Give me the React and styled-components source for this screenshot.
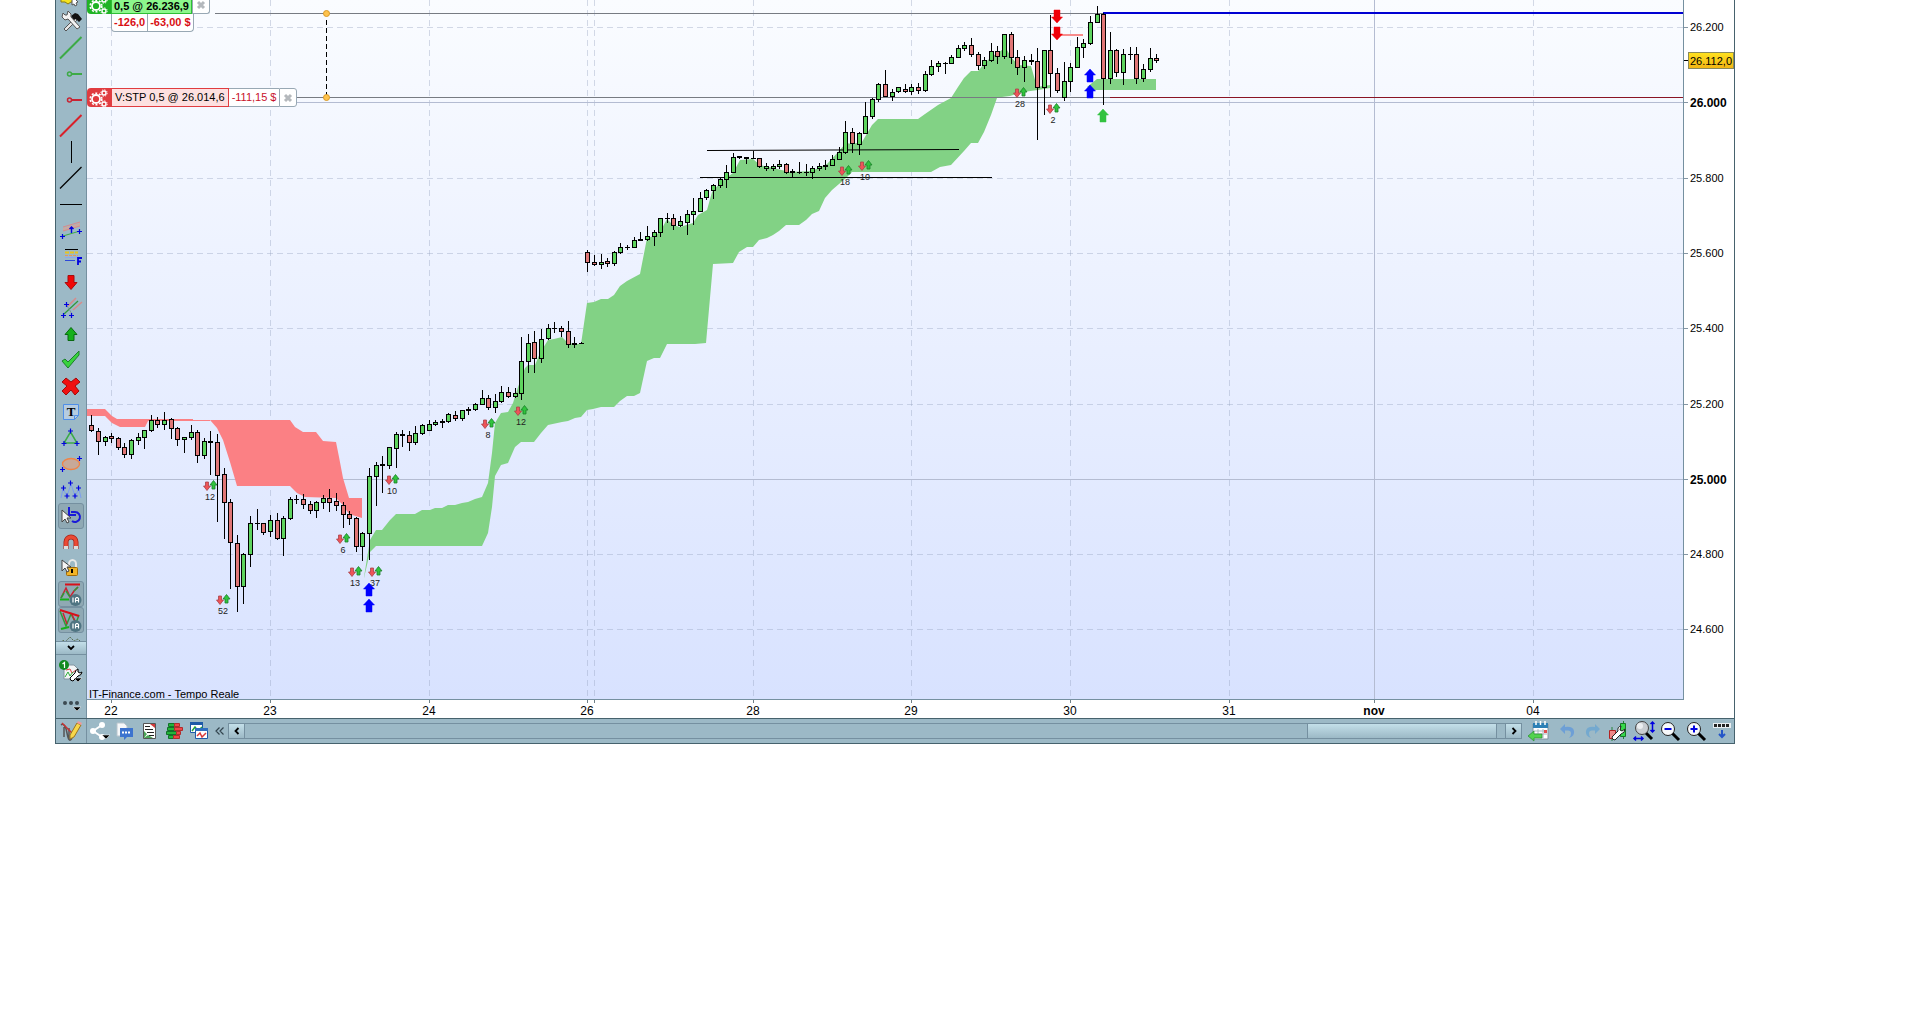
import React from "react";
import styled, { createGlobalStyle, css } from "styled-components";

const COLOR_BAR = "#9cb9c6";
const COLOR_BORDER = "#46626d";
const COLOR_LINE = "#7590a0";
const COLOR_BLUE = "#0000e0";

const GlobalStyle = createGlobalStyle`
  body {
    margin: 0;
    background: white;
    font-family: "Liberation Sans", Arial, sans-serif;
    font-size: 11px;
    color: black;
  }
  button {
    font: inherit;
    color: inherit;
    cursor: pointer;
  }
`;

const Window = styled.main`
  margin: 0 179px 0 55px;
  border: 1px solid ${COLOR_BORDER};
  border-top: 0;
`;

const Body = styled.div`
  display: grid;
  grid-template-columns: 31px 1fr;
`;

const Toolbar = styled.nav`
  display: flex;
  flex-direction: column;
  height: 718px;
  box-sizing: border-box;
  background: ${COLOR_BAR};
  border-right: 1px solid ${COLOR_LINE};
`;

const ToolList = styled.div`
  height: 641px;
  overflow: hidden;
`;

const ToolStack = styled.div`
  display: flex;
  flex-direction: column;
  align-items: center;
  margin-top: -17px;
`;

const ToolButton = styled.button`
  display: flex;
  align-items: center;
  justify-content: center;
  flex: none;
  box-sizing: border-box;
  width: 26px;
  height: 26px;
  padding: 0;
  border: 1px solid transparent;
  border-radius: 3px;
  background: none;

  ${(props) =>
    props.$active &&
    css`
      background: #8fa9b4;
      border-color: #7590a0;
    `}
`;

const CollapseButton = styled.button`
  display: flex;
  align-items: center;
  justify-content: center;
  height: 14px;
  padding: 0;
  border: solid ${COLOR_LINE};
  border-width: 1px 0;
  background: linear-gradient(#c3dfe9, #9cb9c6);
`;

const ToolFooter = styled.div`
  display: flex;
  flex-direction: column;
  align-items: center;
  gap: 4px;
  padding-top: 4px;
`;

const ChartArea = styled.section`
  display: grid;
  grid-template-columns: 1fr 50px;
  grid-template-rows: 700px 18px;
  min-width: 0;
`;

const Plot = styled.div`
  position: relative;
  overflow: hidden;
  border-right: 1px solid ${COLOR_LINE};
  border-bottom: 1px solid ${COLOR_LINE};
  background: linear-gradient(#fafcff, #d8e2ff);
`;

const Drawing = styled.svg`
  display: block;
  width: 100%;
  height: 100%;
  overflow: ${(props) => (props.$spill ? "visible" : "hidden")};
  font-family: "Liberation Sans", Arial, sans-serif;
  font-size: 11px;
`;

const OrderButton = styled.button`
  display: flex;
  align-items: center;
  justify-content: center;
  width: 24px;
  padding: 0;
  border: 0;
  border-radius: 4px 0 0 4px;
  background: ${(props) => props.$color};
`;

const OrderText = styled.span`
  box-sizing: border-box;
  padding: 0 3px;
  border: 1px solid ${(props) => props.$border};
  background: ${(props) => props.$fill};
  font-weight: ${(props) => (props.$bold ? "bold" : "normal")};
`;

const Amount = styled.span`
  box-sizing: border-box;
  padding: 0 3px;
  border: solid #98a8b4;
  border-width: 1px 0;
  background: white;
  color: #c8102a;
`;

const CloseButton = styled.button`
  display: flex;
  align-items: center;
  justify-content: center;
  box-sizing: border-box;
  width: 18px;
  padding: 0;
  border: 1px solid #98a8b4;
  border-radius: 0 3px 3px 0;
  background: white;
`;

const OrderTag = styled.div`
  position: absolute;
  left: 0;
  top: ${(props) => props.$top}px;
  display: flex;
  height: 19px;
  line-height: 17px;
  white-space: nowrap;

  ${(props) =>
    props.$docked &&
    css`
      height: 14px;
      line-height: 12px;

      ${OrderButton}, ${CloseButton} {
        box-sizing: border-box;
        padding-bottom: 4px;
        border-top: 0;
        border-top-left-radius: 0;
        border-top-right-radius: 0;
      }
      ${OrderText} {
        padding: 0 2px;
        border-top: 0;
      }
    `}
`;

const Result = styled.div`
  position: absolute;
  left: 24px;
  top: 14px;
  display: flex;
  height: 17px;
  line-height: 17px;
  border: 1px solid #98a8b4;
  border-top: 0;
  border-radius: 0 0 4px 4px;
  background: white;
  color: #d80f14;
  font-weight: bold;
`;

const ResultCell = styled.span`
  padding: 0 2px;
  & + & {
    border-left: 1px solid #98a8b4;
  }
`;

const BottomBar = styled.footer`
  display: flex;
  align-items: center;
  height: 24px;
  border-top: 1px solid ${COLOR_BORDER};
  background: ${COLOR_BAR};
`;

const Corner = styled.div`
  display: flex;
  align-items: center;
  justify-content: center;
  width: 30px;
  height: 24px;
  border-right: 1px solid ${COLOR_LINE};
`;

const BarGroup = styled.div`
  display: flex;
  align-items: center;
`;

const BarButton = styled.button`
  display: flex;
  align-items: center;
  justify-content: center;
  width: ${(props) => (props.$wide ? 26 : 25)}px;
  height: 24px;
  padding: 0;
  border: 0;
  background: none;
`;

const BackButton = styled(BarButton)`
  width: 16px;
`;

const ScrollBar = styled.div`
  display: flex;
  flex: 1;
  height: 16px;
  box-sizing: border-box;
  margin-right: 4px;
  border: solid ${COLOR_LINE};
  border-width: 1px 0;
`;

const ScrollButton = styled.button`
  display: flex;
  align-items: center;
  justify-content: center;
  box-sizing: border-box;
  width: 17px;
  padding: 0;
  border: solid ${COLOR_LINE};
  border-width: 0 1px;
  background: linear-gradient(#c3dfe9, #9cb9c6);
`;

const Track = styled.div`
  display: flex;
  justify-content: flex-end;
  flex: 1;
  padding-right: 8px;
`;

const Thumb = styled.div`
  width: 15%;
  border: solid ${COLOR_LINE};
  border-width: 0 1px;
  background: linear-gradient(#c3dfe9, #9cb9c6);
`;

function Icon({ size = 24, children }) {
  return (
    <svg width={size} height={size} viewBox={`0 0 ${size} ${size}`} fill="none" aria-hidden="true">
      {children}
    </svg>
  );
}

// blue anchor crosses, one for each [x, y]
function Crosses({ at }) {
  return (
    <path
      d={at.map(([x, y]) => `M${x - 2.5} ${y}h5M${x} ${y - 2.5}v5`).join("")}
      stroke={COLOR_BLUE}
      strokeWidth="1.2"
    />
  );
}

const IaBadge = () => (
  <>
    <circle cx="16.5" cy="18" r="6" fill="#4f7482" />
    <path d="M14 15.5v5M16.500 20.500v-4l1-1h1l1 1v4M16.500 18.500h3" stroke="white" strokeWidth="1.2" />
  </>
);

const tools = [
  {
    name: "Alert",
    icon: (
      <>
        <path d="M2 9h12v9h-2l-3 2-3-2H2z" fill="#f5e420" stroke="#8c7d10" />
        <path d="m13 12 6 6-2 1 1 2-2 1-1-2-2 1z" fill="white" stroke="#555" />
      </>
    ),
  },
  {
    name: "Tools",
    icon: (
      <>
        <path d="M5 19 16 8l2 2L7 21z" fill="#e6e6e6" stroke="#555" />
        <path d="M12 6l4-3 3 1 4 5-3 3-3-3-2 1z" fill="#111" />
        <path d="M4 3 3 7l3 3 3-1 9 10 3-2-9-10 0-3-3-3-1 4-2 0z" fill="#f2f2f2" stroke="#555" />
      </>
    ),
  },
  { name: "Up trend", icon: <path d="M1 22.500 22.500 1" stroke="#3daa46" strokeWidth="2" /> },
  {
    name: "Green segment",
    icon: (
      <g stroke="#3daa46" strokeWidth="1.5">
        <circle cx="10.500" cy="12" r="2" />
        <path d="M12 12h11" strokeWidth="2" />
      </g>
    ),
  },
  {
    name: "Red segment",
    icon: (
      <g stroke="#c92332" strokeWidth="1.5">
        <circle cx="10.500" cy="12" r="2" />
        <path d="M12 12h11" strokeWidth="2" />
      </g>
    ),
  },
  { name: "Down trend", icon: <path d="M1 22.500 22.500 1" stroke="#d9202a" strokeWidth="2" /> },
  { name: "Vertical line", icon: <path d="M12.500 1v22" stroke="black" /> },
  { name: "Line", icon: <path d="M1 22.500 22.500 1" stroke="black" strokeWidth="1.2" /> },
  { name: "Horizontal line", icon: <path d="M1 12.500h22" stroke="black" /> },
  {
    name: "Channel",
    icon: (
      <>
        <path d="m4 13 17-5V5L4 10z" fill="#c9a9a0" />
        <path d="m4 9 17-5M4 13l17-5" stroke="#d98a8a" />
        <path d="m4 18 17-5" stroke="#3daa46" />
        <path d="M12.500 15V9m-2 2 2-2 2 2" stroke={COLOR_BLUE} strokeWidth="1.4" />
        <Crosses at={[[3.5, 18.5], [20.5, 13.5]]} />
      </>
    ),
  },
  {
    name: "Fibonacci",
    icon: (
      <>
        <path d="M6 5.500h13" stroke="black" />
        <path d="M6 8.500h13" stroke="#e6c520" strokeWidth="2" strokeDasharray="4 1" />
        <path d="M6 11.500h13" stroke="#e9965a" strokeDasharray="3 1" />
        <path d="M6 13.500h13" stroke="#8fa5ee" />
        <path d="M6 16.500h10" stroke="#2c48d8" />
        <path d="M19 21v-7h4M19 17.500h3" stroke={COLOR_BLUE} strokeWidth="1.800" />
      </>
    ),
  },
  { name: "Sell arrow", icon: <path d="M9 5.500h6v7h3l-6 7-6-7h3z" fill="#f00707" stroke="#a80c0c" /> },
  {
    name: "Pitchfork",
    icon: (
      <>
        <path d="m9 10 8-8M14 14l9-8" stroke="#d98a8a" strokeWidth="1.500" />
        <path d="M5 18 19 5" stroke="#2f9a3a" strokeWidth="1.200" />
        <path d="m7 8 6 10" stroke="#7d909e" />
        <Crosses at={[[7.5, 8.5], [4.5, 19.5], [12.5, 19.5]]} />
      </>
    ),
  },
  { name: "Buy arrow", icon: <path d="M9 18.500h6v-6h3L12 5.500l-6 7h3z" fill="#16b01c" stroke="#0a6a12" /> },
  { name: "Tick", icon: <path d="m3 13 3-2 3 3 11-11v4L9 20z" fill="#38d33c" stroke="#1c7f2b" /> },
  {
    name: "Cross",
    icon: <path d="m7 4 5 4 5-4 4 4-5 4 4 5-4 4-4-5-5 5-4-4 5-5-5-4z" fill="#f01010" stroke="#a00c0c" />,
  },
  {
    name: "Text",
    icon: (
      <>
        <path d="M4.500 4.500h15v11l-4 4h-11z" fill="#b6cce0" stroke="#4f8fe8" />
        <path d="M19.500 15.500h-4v4" stroke="#4f8fe8" />
        <text x="12" y="16" textAnchor="middle" fontFamily="Liberation Serif, serif" fontSize="13" fontWeight="bold" fill="black">
          T
        </text>
      </>
    ),
  },
  {
    name: "Triangle",
    icon: (
      <>
        <path d="M11.500 6 18 17H5z" stroke="#3daa46" strokeWidth="1.500" />
        <Crosses at={[[11.5, 5], [5, 17.5], [18, 17.5]]} />
      </>
    ),
  },
  {
    name: "Ellipse",
    icon: (
      <>
        <ellipse cx="12" cy="12" rx="8.500" ry="5.500" fill="#c7a999" stroke="#ee8448" strokeWidth="1.300" />
        <Crosses at={[[20.5, 6.500], [3.5, 17.5]]} />
      </>
    ),
  },
  {
    name: "Waves",
    icon: (
      <>
        <path d="m2 20 2-9 4 7 4-12 4 12 4-7 2 9" stroke="#7d9df0" />
        <Crosses at={[[11.5, 5], [4.5, 10], [19.5, 10], [8, 18], [16, 18]]} />
      </>
    ),
  },
  {
    name: "Undo drawing",
    active: true,
    icon: (
      <>
        <path d="M12 8h4a5 5 0 1 1-3 9" stroke="#1a1ad8" strokeWidth="2" />
        <path d="M10 3v8h7" stroke="#1a1ad8" strokeWidth="2" />
        <path d="M3 6v12l3-3 2 4 2-1-2-4h4z" fill="#f4f4f4" stroke="#444" />
      </>
    ),
  },
  {
    name: "Magnet",
    icon: (
      <>
        <path d="M7 19v-7a5 5 0 0 1 10 0v7" stroke="#a92319" strokeWidth="5" />
        <path d="M7 19v-7a5 5 0 0 1 10 0v7" stroke="#ea4a35" strokeWidth="3.500" />
        <path d="M5 17.500h4M15 17.500h4" stroke="#ddd" strokeWidth="3" />
      </>
    ),
  },
  {
    name: "Lock",
    icon: (
      <>
        <path d="M10 12V8a3.500 4 0 0 1 7 0v4" stroke="#e8e8e8" strokeWidth="2" />
        <rect x="7.500" y="11.500" width="11" height="8" rx="1" fill="#f0b428" stroke="#a06a08" />
        <path d="M13 13v4" stroke="black" strokeWidth="2" />
        <path d="M3 4v11l3-3 2 4 2-1-2-4h4z" fill="#f4f4f4" stroke="#444" />
      </>
    ),
  },
  {
    name: "Automatic supports",
    active: true,
    icon: (
      <>
        <path d="M2 16 7 6l4 9 4-6 4-4" stroke="#c92332" strokeWidth="1.500" />
        <path d="m2 16 3-5M7 9l4 6M15 9l4-4" stroke="#2f9a3a" strokeWidth="1.500" />
        <path d="M6 2.500h15" stroke="#d9101a" strokeWidth="2" />
        <path d="M1 17.500h9" stroke="#16b01c" strokeWidth="2" />
        <IaBadge />
      </>
    ),
  },
  {
    name: "Automatic trends",
    active: true,
    icon: (
      <>
        <path d="m1 3 6 15L12 6l5 9 3-8" stroke="#2f9a3a" strokeWidth="1.500" />
        <path d="M4 5l4 11M13 7l4 8" stroke="#c92332" strokeWidth="1.500" />
        <path d="m1 2 19 6" stroke="#d9101a" strokeWidth="2" />
        <path d="m2 21 8-2" stroke="#16b01c" strokeWidth="2" />
        <IaBadge />
      </>
    ),
  },
  {
    name: "Patterns",
    icon: <path d="m2 8 2-2 2 2 5-5 4 4 4-2 3 3" stroke="#5a6f50" strokeDasharray="2 1" />,
  },
];

// x, high, low, body top, body bottom, type (g = up, r = down, d = doji)
const candles = `
91 415 432 425 431 r,98 428 455 431 442 r,105 436 446 437 442 g,111 433 443 436 439 r,118 437 450 438 448 r,
124 443 458 447 455 r,131 439 459 440 455 g,138 433 445 437 441 g,144 430 449 430 438 g,151 415 432 420 431 g,
157 417 428 420 425 r,164 412 430 420 425 g,171 418 439 419 429 r,177 427 446 428 440 r,184 437 453 437 440 g,
191 425 440 432 438 g,197 430 463 432 456 r,204 438 459 441 456 g,210 431 475 441 443 d,217 434 522 442 476 r,
224 468 539 474 503 r,230 499 589 502 543 r,237 535 612 543 587 r,243 553 604 554 587 g,250 516 567 523 555 g,
257 509 530 523 524 d,263 523 535 523 533 r,270 515 537 520 532 g,277 513 540 520 539 r,283 516 556 518 539 g,
290 497 520 499 519 g,296 495 504 499 500 d,303 494 509 499 505 r,310 501 514 504 511 r,316 501 518 502 511 g,
323 495 509 498 503 g,329 489 512 498 503 r,336 493 511 501 506 r,343 502 528 505 515 r,349 511 525 514 519 r,
356 517 552 518 547 r,362 532 561 533 547 g,369 468 560 476 534 g,376 462 506 465 477 g,382 456 493 464 466 d,
389 447 469 447 466 g,396 432 468 434 449 g,402 430 447 434 436 d,409 431 451 435 443 r,415 426 445 433 443 g,
422 424 435 425 434 g,429 420 431 424 431 g,435 420 426 422 425 g,442 419 428 421 423 d,448 413 423 414 422 g,
455 411 421 415 419 r,462 410 421 410 419 g,468 407 415 409 411 d,475 403 411 404 410 g,482 390 405 398 405 g,
488 395 410 398 408 r,495 394 413 401 408 g,501 386 403 392 402 g,508 387 398 392 397 r,515 388 398 393 397 g,
521 337 400 361 394 g,528 334 373 343 362 g,534 331 373 342 359 r,541 329 363 339 359 g,548 324 340 328 339 g,
554 322 333 328 329 d,561 326 337 328 332 r,568 321 348 331 345 r,574 337 348 343 345 d,581 342 344 343 344 d,
587 250 272 252 263 r,594 255 266 262 265 r,601 254 269 262 265 g,607 258 267 261 264 r,614 251 266 252 264 g,
620 243 254 247 253 g,627 245 250 247 248 d,634 237 248 240 248 g,640 232 240 239 241 d,647 226 241 236 240 g,
654 230 246 232 237 g,660 218 237 218 233 g,667 213 223 218 219 d,673 214 230 218 226 r,680 216 227 221 226 g,
687 210 235 214 223 g,693 198 225 211 215 g,700 192 212 198 212 g,706 189 200 190 198 g,713 184 199 185 191 g,
720 178 188 179 186 g,726 165 188 172 180 g,733 153 173 157 173 g,739 156 159 156 158 d,746 157 164 157 159 d,
753 151 159 158 159 d,759 158 168 158 167 r,766 163 171 166 169 g,773 164 171 166 169 g,779 160 169 164 167 g,
786 163 174 164 173 r,792 169 177 171 173 d,799 162 174 172 173 d,806 164 176 172 173 d,812 166 179 168 173 g,
819 163 171 166 169 g,825 160 170 165 167 d,832 155 166 159 166 g,839 147 160 152 160 g,845 121 154 132 153 g,
852 128 153 132 144 r,859 132 155 133 145 g,865 102 134 116 134 g,872 98 119 99 117 g,878 83 102 84 100 g,
885 70 97 84 97 r,892 89 101 92 97 g,898 87 93 87 92 g,905 84 93 89 92 r,911 84 95 87 92 g,
918 83 94 87 91 r,925 71 92 74 91 g,931 60 76 66 75 g,938 61 72 63 67 g,945 62 74 63 64 d,
951 55 64 57 64 g,958 45 58 48 58 g,964 42 51 45 49 g,971 38 57 45 55 r,978 52 70 54 66 r,
984 57 69 60 66 g,991 43 62 51 61 g,997 46 64 51 57 r,1004 34 59 34 57 g,1011 32 64 34 58 r,
1017 50 75 57 68 r,1024 56 82 60 68 g,1031 54 65 60 62 d,1037 48 140 61 88 r,1044 50 115 50 88 g,
1050 15 97 50 74 r,1057 68 93 73 91 r,1064 62 101 81 98 g,1070 63 92 67 82 g,1077 37 68 47 68 g,
1083 39 58 43 48 g,1090 16 45 22 44 g,1097 6 23 14 23 g,1103 13 105 14 79 r,1110 32 84 50 79 g,
1116 49 77 50 73 r,1123 49 85 54 73 g,1130 47 60 54 55 d,1136 47 84 54 79 r,1143 64 82 69 79 g,
1150 48 72 58 70 g,1156 54 63 58 61 r`
  .split(",")
  .map((row) => row.trim().split(" "))
  .map(([x, high, low, top, bottom, type]) => ({ x: +x, high: +high, low: +low, top: +top, bottom: +bottom, type }));

const redClouds = [
  "87,409 105,409 112,416 117,419 193,419 193,420 210,420 210,421 148,421 145,427 120,427 112,423 105,416 87,416",
  "193,420 290,420 295,427 303,432 316,432 323,441 336,442 339,457 343,478 349,498 362,498 362,518 349,514 342,504 336,498 305,497 297,493 290,486 237,486 230,462 223,440 217,428 210,420",
];

const greenClouds = [
  "364,577 370,540 376,530 382,530 390,520 396,514 415,514 422,510 430,510 435,508 442,508 448,505 455,505 462,503 468,502 475,499 482,497 488,483 492,453 495,423 501,413 508,412 513,403 518,387 525,368 528,365 535,365 540,353 548,340 554,339 562,337 568,343 575,344 581,344 587,303 594,302 601,299 608,299 614,295 620,286 627,281 640,274 647,238 654,236 660,232 667,219 673,225 680,227 693,223 698,215 707,210 712,192 720,183 726,178 733,173 740,160 753,159 760,165 773,168 790,172 812,171 827,164 839,151 846,143 852,144 862,142 872,125 878,119 918,119 925,114 938,105 951,98 958,87 964,78 971,71 978,71 985,63 991,57 1002,50 1007,50 1011,57 1018,65 1031,66 1035,80 1037,87 1050,85 1050,88 1038,90 1023,92 1010,96 1002,97 997,98 991,115 984,132 978,143 971,143 964,151 951,165 940,167 931,172 852,172 846,178 832,190 825,198 819,211 812,214 806,220 799,225 786,225 779,231 773,235 767,238 759,240 753,247 747,247 739,252 733,263 713,264 706,343 695,344 667,344 660,358 654,358 647,361 640,393 634,396 627,396 620,401 614,407 601,407 593,409 587,410 581,417 575,418 568,421 562,422 548,425 541,433 534,442 521,442 515,447 508,463 501,465 495,476 492,507 488,533 482,546 376,546 370,552 364,578",
  "1087,87 1092,83 1097,79 1156,79 1156,90 1093,90",
];

const signals = [
  [210, 497, "12"],
  [223, 611, "52"],
  [343, 550, "6"],
  [355, 583, "13"],
  [375, 583, "37"],
  [392, 491, "10"],
  [488, 435, "8"],
  [521, 422, "12"],
  [845, 182, "18"],
  [865, 177, "10"],
  [1020, 104, "28"],
  [1053, 120, "2"],
];

const bigArrows = [
  { x: 369, y: 583, color: "#0000ff", up: true },
  { x: 369, y: 599, color: "#0000ff", up: true },
  { x: 1090, y: 69, color: "#0000ff", up: true },
  { x: 1090, y: 85, color: "#0000ff", up: true },
  { x: 1103, y: 109, color: "#33c240", up: true },
  { x: 1057, y: 10, color: "#f00008" },
  { x: 1057, y: 27, color: "#f00008" },
];

const prices = [
  { y: 27, label: "26.200" },
  { y: 102, label: "26.000", major: true },
  { y: 178, label: "25.800" },
  { y: 253, label: "25.600" },
  { y: 328, label: "25.400" },
  { y: 404, label: "25.200" },
  { y: 479, label: "25.000", major: true },
  { y: 554, label: "24.800" },
  { y: 629, label: "24.600" },
];

const dates = [
  { x: 111, label: "22" },
  { x: 270, label: "23" },
  { x: 429, label: "24" },
  { x: 587, label: "26" },
  { x: 594 },
  { x: 753, label: "28" },
  { x: 911, label: "29" },
  { x: 1070, label: "30" },
  { x: 1229, label: "31" },
  { x: 1374, label: "nov", major: true },
  { x: 1533, label: "04" },
];

function Candle({ x, high, low, top, bottom, type }) {
  return (
    <g>
      <rect x={x} y={high} width="1" height={low - high} />
      {type === "d" ? (
        <rect x={x - 2} y={top} width="5" height={bottom - top} />
      ) : (
        <rect
          x={x - 1.5}
          y={top + 0.5}
          width="4"
          height={bottom - top - 1}
          fill={type === "g" ? "#5ed45e" : "#e07676"}
          stroke="black"
        />
      )}
    </g>
  );
}

function Signal({ x, y, label }) {
  return (
    <g transform={`translate(${x} ${y})`}>
      <path d="M-4.500-15h3v4h2l-3.500 4.500-3.500-4.500h2z" fill="#ee5458" stroke="#a8434a" strokeWidth=".8" />
      <path d="M2-8h3v-4h2l-3.500-4.500L0-12h2z" fill="#30c43c" stroke="#197f2a" strokeWidth=".8" />
      <text y="3" fontSize="9" textAnchor="middle" fill="#222">
        {label}
      </text>
    </g>
  );
}

function BigArrow({ x, y, color, up }) {
  return (
    <path
      transform={`translate(${x} ${y + 6.5}) scale(1 ${up ? 1 : -1})`}
      d="M0-6.500 5.500-.5H3v7h-6v-7h-2.500z"
      fill={color}
      stroke={color}
      strokeWidth=".5"
    />
  );
}

function Chart() {
  return (
    <Drawing role="img" aria-label="Price chart">
      <g transform="translate(-87 0)">
        {/* the lines run past the right edge and are clipped there */}
        <g stroke="#94a0bc" strokeOpacity=".38" strokeDasharray="6 4">
          {prices.map((p) =>
            p.major ? null : <line key={p.y} x1="87" x2="110%" y1={p.y + 0.5} y2={p.y + 0.5} />
          )}
          {dates.map((d) => (d.major ? null : <line key={d.x} x1={d.x + 0.5} x2={d.x + 0.5} y1="0" y2="699" />))}
        </g>
        <g stroke="#b4bcd2">
          {prices.map((p) =>
            p.major ? <line key={p.y} x1="87" x2="110%" y1={p.y + 0.5} y2={p.y + 0.5} /> : null
          )}
          <line x1="1374.500" x2="1374.500" y1="0" y2="699" />
        </g>
        {redClouds.map((points) => (
          <polygon key={points} points={points} fill="#fb8084" />
        ))}
        {greenClouds.map((points) => (
          <polygon key={points} points={points} fill="#82d285" />
        ))}
        <path d="M1060 35h23" stroke="#f88c8c" strokeWidth="2" />
        <path d="M215 13.500h888M296 97.500h814" stroke="#777b82" />
        <line x1="1110" x2="110%" y1="97.500" y2="97.500" stroke="#8a1424" />
        <line x1="1103" x2="110%" y1="13" y2="13" stroke="#0000d2" strokeWidth="2" />
        <path d="M707 150.500 959 149.500M700 177.500h292" stroke="black" />
        <path d="M326.500 20v76" stroke="black" strokeDasharray="5 3" />
        <circle cx="326.500" cy="13.500" r="3" fill="#ffc34d" stroke="#d99a28" />
        <circle cx="326.500" cy="97.500" r="3" fill="#ffc34d" stroke="#d99a28" />
        {candles.map((candle) => (
          <Candle key={candle.x} {...candle} />
        ))}
        {signals.map(([x, y, label]) => (
          <Signal key={x} x={x} y={y} label={label} />
        ))}
        {bigArrows.map((arrow) => (
          <BigArrow key={`${arrow.x}-${arrow.y}`} {...arrow} />
        ))}
        <text x="89" y="698">
          IT-Finance.com - Tempo Reale
        </text>
      </g>
    </Drawing>
  );
}

function PriceAxis() {
  return (
    <Drawing>
      <defs>
        <linearGradient id="gold" x2="0" y2="1">
          <stop stopColor="#ffe21f" />
          <stop offset="1" stopColor="#f3b414" />
        </linearGradient>
      </defs>
      {prices.map((p) => (
        <g key={p.y}>
          <path d={`M0 ${p.y + 0.5}h4`} stroke="#8496a4" />
          <text
            x="6"
            y={p.y + (p.major ? 5 : 4)}
            fontSize={p.major ? 12 : 11}
            fontWeight={p.major ? "bold" : "normal"}
          >
            {p.label}
          </text>
        </g>
      ))}
      <path d="M0 60.500h5" stroke="black" />
      <rect x="4.500" y="52.500" width="45" height="16" fill="url(#gold)" stroke="#8a8a5c" />
      <text x="6" y="65">
        26.112,0
      </text>
    </Drawing>
  );
}

function DateAxis() {
  return (
    <Drawing $spill>
      {dates.map((d) => (
        <g key={d.x} transform={`translate(${d.x - 87} 0)`}>
          <path d="M.5-1v4" stroke="#6f8088" />
          <text x="0" y="15" textAnchor="middle" fontSize="12" fontWeight={d.major ? "bold" : "normal"}>
            {d.label}
          </text>
        </g>
      ))}
    </Drawing>
  );
}

const Gears = () => (
  <Icon size={20}>
    <g stroke="white">
      <circle cx="7" cy="11" r="4" strokeWidth="1.800" />
      <circle cx="7" cy="11" r="5.800" strokeWidth="1.600" strokeDasharray="2 1.700" />
      <circle cx="15" cy="5" r="2" strokeWidth="1.400" />
      <circle cx="15" cy="5" r="3.200" strokeDasharray="1.300 1.200" />
      <circle cx="15" cy="16" r="2" strokeWidth="1.400" />
      <circle cx="15" cy="16" r="3.200" strokeDasharray="1.300 1.200" />
    </g>
  </Icon>
);

const CloseMark = () => (
  <Icon size={10}>
    <path d="m2 2 6 6M8 2 2 8" stroke="#b4b8bc" strokeWidth="3" />
  </Icon>
);

const Chevron = ({ d }) => (
  <Icon size={10}>
    <path d={d} stroke="black" strokeWidth="1.800" />
  </Icon>
);

const leftActions = [
  {
    name: "Share",
    icon: (
      <>
        <path d="m5 12 9-6M5 12l9 6" stroke="white" strokeWidth="2" />
        <circle cx="5" cy="12" r="3" fill="white" />
        <circle cx="14" cy="6" r="3" fill="white" />
        <circle cx="14" cy="18" r="3" fill="white" />
        <path d="M14 16h8l-4 4z" fill="black" stroke="white" strokeWidth=".5" />
      </>
    ),
  },
  {
    name: "Comments",
    icon: (
      <>
        <path d="M4 4h7l3 3v10H4z" fill="#f6f8fa" stroke="#b9c4cc" />
        <path d="M7 9h13v9h-6l-3 3v-3H7z" fill="#3c73cf" />
        <path d="M9 13.500h2M12 13.500h2M15 13.500h2" stroke="white" strokeWidth="2" />
      </>
    ),
  },
  {
    name: "Report",
    icon: (
      <>
        <path d="M5.500 4.500h12v15h-12z" fill="white" stroke="#555" />
        <path d="M7 7.500h5M7 10.500h8M9 13.500h7M11 16.500h5" stroke="#222" strokeWidth="1.200" />
        <path d="m12 5 5 4V5z" fill="#d33a3a" />
        <path d="m6 12 3 3-3 4zM6 19l4-3 5 3z" fill="#4aa556" />
      </>
    ),
  },
  {
    name: "Order book",
    icon: (
      <>
        <path d="M5.500 4.500h6v3h-6zM4.500 8.500h7v3h-7zM3.500 12.500h10v3h-10zM5.500 16.500h5v3h-5z" fill="#24b53a" stroke="#12722a" />
        <path d="M11.500 4.500h5v3h-5zM11.500 8.500h8v3h-8zM13.500 12.500h4v3h-4zM10.500 16.500h6v3h-6z" fill="#ef4747" stroke="#b02c2c" />
      </>
    ),
  },
  {
    name: "Windows",
    icon: (
      <>
        <path d="M2.500 3.500h12v10h-12z" fill="white" stroke="#1e5aa8" />
        <path d="M2 3h13v3H2z" fill="#1e5aa8" />
        <path d="m4 12 3-4 3 4 4-4" stroke="#22a23a" strokeWidth="1.500" />
        <path d="M7.500 9.500h12v10h-12z" fill="white" stroke="#1e5aa8" />
        <path d="M7 9h13v3H7z" fill="#2f6fc0" />
        <path d="m9 17 3-3 2 4 4-4" stroke="#d93a3a" strokeWidth="1.500" />
      </>
    ),
  },
];

const Lens = ({ children }) => (
  <>
    <path d="m15 14 7 7" stroke="black" strokeWidth="3" />
    <circle cx="11" cy="10" r="6.500" fill="#f7f9fb" stroke="#222" />
    {children}
  </>
);

const rightActions = [
  {
    name: "Go to date",
    icon: (
      <>
        <path d="M6 5h15v15H6z" fill="white" stroke="#8294a0" />
        <path d="M6 4h15v5H6z" fill="#2d80b5" />
        <path d="M9 2v4M13.500 2v4M18 2v4" stroke="white" strokeWidth="1.500" />
        <path d="M7 12h13M7 15h13M11 10v9M16 10v9" stroke="#aab7c0" />
        <path d="M17 11h3v3h-3z" fill="#e05050" />
        <path d="M1 17l6-5v3h8v4H7v3z" fill="#53d34e" stroke="#2a8d30" strokeWidth=".7" />
      </>
    ),
  },
  {
    name: "Undo",
    icon: <path d="M12 5 7 10l5 5v-3.500h3q3 0 3 3t-2 4.500q6-2 5-7t-9-4z" fill="#6d9fd6" />,
  },
  {
    name: "Redo",
    icon: <path d="m16 5 5 5-5 5v-3.500h-3q-3 0-3 3t2 4.500q-6-2-5-7t9-4z" fill="#74a9cf" />,
  },
  {
    name: "Chart settings",
    icon: (
      <>
        <path d="M7 8v14M18.500 2v18" stroke="#26803a" />
        <path d="M4.500 11.500h6v8h-6z" fill="#e88" stroke="#b32222" />
        <path d="M15.500 4.500h5v13h-5z" fill="#35d84b" stroke="#187828" />
        <path d="m7 18 6-6q-1-4 3-5l-1 4 2 1 3-2q0 4-4 5l-6 6q-3 0-3-3z" fill="white" stroke="#222" />
      </>
    ),
  },
  {
    name: "Fit zoom",
    icon: (
      <>
        <path d="m15 14 6 6" stroke="black" strokeWidth="3" />
        <circle cx="11" cy="9" r="6.500" fill="#c8cdd1" stroke="#444" />
        <circle cx="9" cy="7" r="3" fill="#eceff1" />
        <path d="M21.500 3v10m-2-8 2-2 2 2m-4 6 2 2 2-2M3 19.500h9m-7-2-2 2 2 2m5-4 2 2-2 2" stroke={COLOR_BLUE} strokeWidth="1.500" />
      </>
    ),
  },
  {
    name: "Zoom out",
    icon: (
      <Lens>
        <path d="M7.500 10h7" stroke={COLOR_BLUE} strokeWidth="2" />
      </Lens>
    ),
  },
  {
    name: "Zoom in",
    icon: (
      <Lens>
        <path d="M7.500 10h7M11 6.500v7" stroke={COLOR_BLUE} strokeWidth="2" />
      </Lens>
    ),
  },
  {
    name: "Show more",
    icon: (
      <>
        <path d="M4 4h18v5H4z" fill="#e8eef1" />
        <path d="M5 6.500h16" stroke="#222" strokeWidth="3" strokeDasharray="3 1" />
        <path d="M13 11v6m-3-2 3 3 3-3" stroke="#2456c8" strokeWidth="2" />
      </>
    ),
  },
];

export default function App() {
  return (
    <>
      <GlobalStyle />
      <Window>
        <Body>
          <Toolbar aria-label="Drawing tools">
            <ToolList>
              <ToolStack>
                {tools.map((tool) => (
                  <ToolButton key={tool.name} $active={tool.active} aria-label={tool.name}>
                    <Icon>{tool.icon}</Icon>
                  </ToolButton>
                ))}
              </ToolStack>
            </ToolList>
            <CollapseButton aria-label="More tools">
              <Chevron d="m2 3 3 3 3-3" />
            </CollapseButton>
            <ToolFooter>
              <ToolButton aria-label="Templates">
                <Icon>
                  <path d="M5 5h10l4 4v10H5z" fill="#f3f5f6" stroke="#8294a0" />
                  <path d="m7 10 4-1 2 4 4-3" stroke="#d33a3a" />
                  <path d="m6 17 3-5 2 4 3-4" stroke="#2fae3a" />
                  <path d="m11 18 5-5q0-3 3-4v3l2 1 2-1q0 3-4 4l-5 5q-3 0-3-3z" fill="white" stroke="black" />
                  <path d="M15 18h8l-4 4z" fill="black" stroke="white" strokeWidth=".5" />
                  <circle cx="5" cy="5" r="5" fill="#128a1e" />
                  <path d="M3.500 4 5.500 2.500V8" stroke="white" strokeWidth="1.200" />
                </Icon>
              </ToolButton>
              <ToolButton aria-label="Options">
                <Icon>
                  <circle cx="6" cy="13" r="2" fill="#3c4a52" />
                  <circle cx="12" cy="13" r="2" fill="#3c4a52" />
                  <circle cx="18" cy="13" r="2" fill="#3c4a52" />
                  <path d="M14 17h8l-4 4z" fill="black" stroke="white" strokeWidth=".5" />
                </Icon>
              </ToolButton>
            </ToolFooter>
          </Toolbar>

          <ChartArea>
            <Plot>
              <Chart />
              <OrderTag $top={0} $docked>
                <OrderButton $color="#20b325" aria-label="Position settings">
                  <Gears />
                </OrderButton>
                <OrderText $border="#2fbf35" $fill="#8cf78c" $bold>
                  0,5 @ 26.236,9
                </OrderText>
                <CloseButton aria-label="Close position">
                  <CloseMark />
                </CloseButton>
              </OrderTag>
              <Result>
                <ResultCell>-126,0</ResultCell>
                <ResultCell>-63,00 $</ResultCell>
              </Result>
              <OrderTag $top={88}>
                <OrderButton $color="#e03c40" aria-label="Stop settings">
                  <Gears />
                </OrderButton>
                <OrderText $border="#e03c40" $fill="#fde0e0">
                  V:STP 0,5 @ 26.014,6
                </OrderText>
                <Amount>-111,15 $</Amount>
                <CloseButton aria-label="Cancel stop">
                  <CloseMark />
                </CloseButton>
              </OrderTag>
            </Plot>
            <PriceAxis />
            <DateAxis />
          </ChartArea>
        </Body>

        <BottomBar>
          <Corner>
            <BarButton aria-label="Draw">
              <Icon>
                <path d="M2 6q4-3 6 8t5 5M5 18V8M10 20V9" stroke="#555" strokeWidth="1.500" />
                <path d="m3 4 10 10" stroke="#c93232" strokeWidth="1.500" />
                <path d="m11 16 7-12 4 2-7 12-4 2z" fill="#f8d74a" stroke="#9c7420" />
                <path d="m18 4 4 2 1-2-4-2z" fill="#f09a9a" />
              </Icon>
            </BarButton>
          </Corner>
          <BarGroup>
            {leftActions.map((action) => (
              <BarButton key={action.name} aria-label={action.name}>
                <Icon>{action.icon}</Icon>
              </BarButton>
            ))}
            <BackButton aria-label="Hide actions">
              <Icon size={10}>
                <path d="M4.500 1.500 1 5l3.500 3.500M8.500 1.500 5 5l3.500 3.500" stroke="#33454f" strokeWidth="1.200" />
              </Icon>
            </BackButton>
          </BarGroup>
          <ScrollBar>
            <ScrollButton aria-label="Scroll left">
              <Chevron d="M6.500 2 3.500 5l3 3" />
            </ScrollButton>
            <Track>
              <Thumb />
            </Track>
            <ScrollButton aria-label="Scroll right">
              <Chevron d="m3.500 2 3 3-3 3" />
            </ScrollButton>
          </ScrollBar>
          <BarGroup>
            {rightActions.map((action) => (
              <BarButton key={action.name} $wide aria-label={action.name}>
                <Icon>{action.icon}</Icon>
              </BarButton>
            ))}
          </BarGroup>
        </BottomBar>
      </Window>
    </>
  );
}
